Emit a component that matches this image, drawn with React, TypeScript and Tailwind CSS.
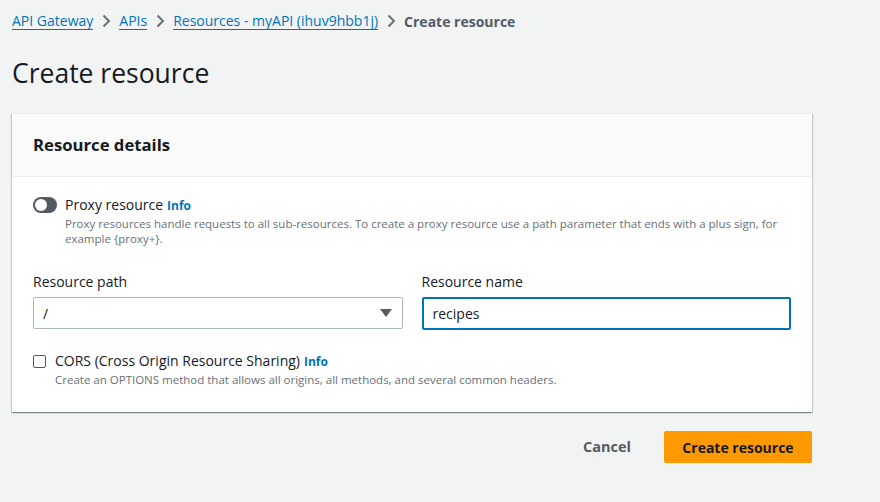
import { useState } from "react";

const font = "font-['Open_Sans','Noto_Sans',sans-serif]";

const Chevron = () => (
  <svg width="16" height="16" viewBox="0 0 16 16" className="mx-[5px] shrink-0">
    <path d="M5.5 2.5 11 8l-5.5 5.5" fill="none" stroke="#687078" strokeWidth="2" />
  </svg>
);

const Info = () => (
  <span className="ml-[4px] text-[12px] font-bold text-[#0073bb]">Info</span>
);

export default function App() {
  const [proxy, setProxy] = useState(false);
  const [cors, setCors] = useState(false);
  const [name, setName] = useState("recipes");

  return (
    <div className={`${font} min-h-[502px] w-[880px] bg-[#f2f3f3] px-[12px] text-[#16191f]`}>
      <nav className="flex h-[42px] items-center text-[14px]">
        <a className="border-b border-[#0073bb] leading-[17px] text-[#0073bb]">API Gateway</a>
        <Chevron />
        <a className="border-b border-[#0073bb] leading-[17px] text-[#0073bb]">APIs</a>
        <Chevron />
        <a className="border-b border-[#0073bb] leading-[17px] text-[#0073bb]">
          Resources - myAPI (ihuv9hbb1j)
        </a>
        <Chevron />
        <span className="font-bold text-[#545b64]">Create resource</span>
      </nav>

      <h1 className="mt-[13px] text-[26.5px] leading-[36px] font-normal">Create resource</h1>

      <div className="mt-[22px] w-[800px] bg-white shadow-[0_1px_1px_0_rgba(0,28,36,0.3),1px_1px_1px_0_rgba(0,28,36,0.15),-1px_1px_1px_0_rgba(0,28,36,0.15)] border-t border-[#eaeded]">
        <div className="flex h-[63px] items-center border-b border-[#eaeded] bg-[#fafafa] px-[21px]">
          <h2 className="text-[16.7px] font-bold">Resource details</h2>
        </div>

        <div className="px-[21px] pt-[18px] pb-[25px]">
          <div className="flex gap-[8px]">
            <button
              onClick={() => setProxy(!proxy)}
              className={`mt-[2px] flex h-[16px] w-[24px] shrink-0 items-center rounded-full px-[2px] ${
                proxy ? "justify-end bg-[#0073bb]" : "justify-start bg-[#545b64]"
              }`}
            >
              <span className="h-[12px] w-[12px] rounded-full bg-white" />
            </button>
            <div>
              <div className="text-[14px] leading-[20px]">
                Proxy resource
                <Info />
              </div>
              <p className="text-[11.5px] leading-[15px] text-[#687078]">
                {"Proxy resources handle requests to all sub-resources. To create a proxy resource use a path parameter that ends with a plus sign, for example {proxy+}."}
              </p>
            </div>
          </div>

          <div className="mt-[26px] grid grid-cols-2 gap-[19px]">
            <label className="flex flex-col">
              <span className="text-[14px] leading-[20px]">Resource path</span>
              <div className="mt-[5px] flex h-[32px] items-center justify-between rounded-[2px] border border-[#aab7b8] px-[9px]">
                <span className="text-[14px]">/</span>
                <svg width="14" height="10" viewBox="0 0 14 10">
                  <path d="M1 1h12L7 9z" fill="#545b64" />
                </svg>
              </div>
            </label>
            <label className="flex flex-col">
              <span className="text-[14px] leading-[20px]">Resource name</span>
              <input
                value={name}
                onChange={(e) => setName(e.target.value)}
                className="mt-[5px] h-[33px] rounded-[2px] border-2 border-[#0073bb] px-[9px] text-[14px] outline-none"
              />
            </label>
          </div>

          <div className="mt-[21px] flex gap-[9px]">
            <input
              type="checkbox"
              checked={cors}
              onChange={(e) => setCors(e.target.checked)}
              className="mt-[4px] h-[13px] w-[13px] shrink-0 appearance-none rounded-[2px] border border-[#545b64] bg-white"
            />
            <div>
              <div className="text-[14px] leading-[20px]">
                CORS (Cross Origin Resource Sharing)
                <Info />
              </div>
              <p className="text-[11.5px] leading-[15px] text-[#687078]">
                Create an OPTIONS method that allows all origins, all methods, and several common
                headers.
              </p>
            </div>
          </div>
        </div>
      </div>

      <div className="mt-[19px] flex w-[800px] items-center justify-end gap-[19px]">
        <button className="px-[14px] text-[14.5px] font-bold text-[#545b64]">Cancel</button>
        <button className="h-[32px] w-[148px] rounded-[2px] bg-[#ff9900] text-[14px] font-bold text-[#16191f]">
          Create resource
        </button>
      </div>
    </div>
  );
}
